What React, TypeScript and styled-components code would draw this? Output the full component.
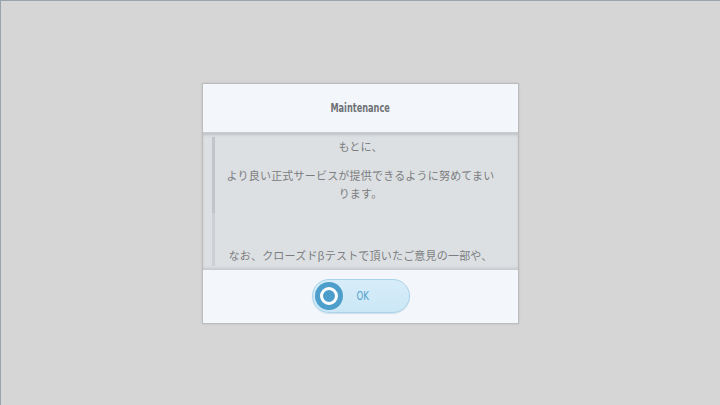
import styled, { createGlobalStyle } from 'styled-components';

const GlobalStyle = createGlobalStyle`
    html, body {
        margin: 0;
        padding: 0;
    }
    body {
        background: #d6d6d6;
        font-family: "Noto Sans CJK JP", "Noto Sans", sans-serif;
    }
`;

const Screen = styled.div`
    width: 720px;
    height: 405px;
    box-sizing: border-box;
    border-top: 1px solid #9aa4ae;
    border-left: 1px solid #9aa4ae;
    display: flex;
    align-items: center;
    justify-content: center;
`;

const Dialog = styled.div`
    width: 317px;
    height: 241px;
    box-sizing: border-box;
    border: 1px solid #bcbcbc;
    background: #f3f6fa;
    display: flex;
    flex-direction: column;
    box-shadow: 0 0 2px rgba(0, 0, 0, 0.12);
`;

const Header = styled.div`
    height: 48px;
    flex-shrink: 0;
    display: flex;
    align-items: center;
    justify-content: center;
    background: #f3f6fa;
    border-bottom: 1px solid #c9ccd0;
`;

const Title = styled.div`
    font-family: "DejaVu Sans Condensed", "Liberation Sans Narrow", sans-serif;
    font-size: 12px;
    font-weight: bold;
    color: #6f7275;
    transform: scaleX(0.76);
`;

const Body = styled.div`
    flex: 1;
    display: flex;
    background: #dde0e3;
    padding: 4px 0 4px 9px;
    box-shadow: inset 0 3px 3px -1px rgba(0, 0, 0, 0.13),
        inset 0 -3px 3px -1px rgba(0, 0, 0, 0.1);
    overflow: hidden;
`;

const Track = styled.div`
    width: 3px;
    flex-shrink: 0;
    background: #cdd0d4;
    display: flex;
    flex-direction: column;
`;

const Thumb = styled.div`
    height: 76px;
    background: #c2c5c9;
`;

const TextColumn = styled.div`
    flex: 1;
    padding-right: 12px;
    display: flex;
    flex-direction: column;
    align-items: center;
    color: #7b7d80;
    font-size: 11px;
    letter-spacing: 0.2px;
    line-height: 18px;
`;

const Paragraph = styled.div<{ gap: number }>`
    margin-top: ${({ gap }) => gap}px;
    text-align: center;
    white-space: nowrap;
`;

const Footer = styled.div`
    height: 53px;
    flex-shrink: 0;
    display: flex;
    align-items: center;
    justify-content: center;
    background: #f3f6fa;
`;

const OkButton = styled.button`
    width: 98px;
    height: 34px;
    box-sizing: border-box;
    border: 1px solid #a9d3ea;
    border-radius: 17px;
    background: linear-gradient(#d7edf9, #cbe7f6);
    padding: 0 0 0 2px;
    display: flex;
    align-items: center;
    gap: 12px;
    cursor: pointer;
    box-shadow: 0 1px 1px rgba(80, 140, 180, 0.2);
`;

const Knob = styled.span`
    width: 28px;
    height: 28px;
    border-radius: 50%;
    background: #4d9ecb;
    display: flex;
    align-items: center;
    justify-content: center;
`;

const Ring = styled.span`
    width: 12px;
    height: 12px;
    border-radius: 50%;
    border: 3px solid #ffffff;
    background: #4d9ecb;
`;

const OkLabel = styled.span`
    font-family: "DejaVu Sans Condensed", "Liberation Sans Narrow", sans-serif;
    font-size: 12px;
    color: #4f9fcf;
    transform: scaleX(0.8);
`;

function App() {
    return (
        <>
            <GlobalStyle />
            <Screen>
                <Dialog>
                    <Header>
                        <Title>Maintenance</Title>
                    </Header>
                    <Body>
                        <Track>
                            <Thumb />
                        </Track>
                        <TextColumn>
                            <Paragraph gap={0}>もとに、</Paragraph>
                            <Paragraph gap={11}>
                                より良い正式サービスが提供できるように努めてまい
                                <br />
                                ります。
                            </Paragraph>
                            <Paragraph gap={44}>
                                なお、クローズドβテストで頂いたご意見の一部や、
                            </Paragraph>
                        </TextColumn>
                    </Body>
                    <Footer>
                        <OkButton>
                            <Knob>
                                <Ring />
                            </Knob>
                            <OkLabel>OK</OkLabel>
                        </OkButton>
                    </Footer>
                </Dialog>
            </Screen>
        </>
    );
}

export default App;
